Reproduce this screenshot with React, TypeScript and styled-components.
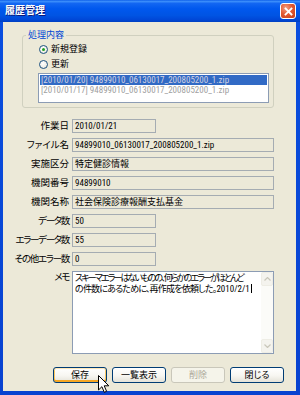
import React, { FC } from 'react';
import styled, { createGlobalStyle, css } from 'styled-components';

const GlobalStyle = createGlobalStyle`
  *, *::before, *::after {
    box-sizing: border-box;
  }
  html, body {
    margin: 0;
    padding: 0;
    background: #ffffff;
  }
`;

const uiFont = `"Roboto Condensed", "DejaVu Sans Condensed", "Noto Sans CJK JP", sans-serif`;

const Window = styled.div`
  position: relative;
  width: 300px;
  height: 395px;
  display: flex;
  flex-direction: column;
  background: linear-gradient(to bottom, #0a4fe0, #0842d0);
  font-family: ${uiFont};
  font-size: 9px;
  font-feature-settings: "palt";
  color: #000;
  overflow: hidden;
`;

const TitleBar = styled.div`
  height: 22px;
  flex: none;
  display: flex;
  align-items: center;
  justify-content: space-between;
  padding: 0 4px 0 5px;
  background: linear-gradient(
    to bottom,
    #0b5ce8 0%,
    #3c8ffb 6%,
    #1266f2 16%,
    #0058ee 40%,
    #0054e3 70%,
    #0048d8 88%,
    #0040c2 100%
  );
`;

const Title = styled.span`
  color: #fff;
  font-weight: bold;
  font-size: 10px;
  line-height: 12px;
  text-shadow: 1px 1px 0 #0a1a7a;
`;

const CloseButton = styled.div`
  width: 16px;
  height: 16px;
  display: flex;
  align-items: center;
  justify-content: center;
  border: 1px solid #fff;
  border-radius: 3px;
  background: radial-gradient(circle at 35% 30%, #f2a085 0%, #e35a33 45%, #c43e17 100%);
`;

const Body = styled.div`
  flex: 1;
  margin: 0 4px 4px 3px;
  padding: 8px 12px 8px 10px;
  display: grid;
  grid-template-columns: 56px 202px;
  grid-template-rows: auto auto 1fr;
  column-gap: 3px;
  background: #ece9d8;
  overflow: hidden;
`;

const GroupBox = styled.fieldset`
  grid-column: 1 / -1;
  margin: 0 0 0 9px;
  padding: 0 4px 4px 3px;
  min-width: 0;
  border: 1px solid #d0d0bf;
  border-radius: 3px;
`;

const Legend = styled.legend`
  padding: 0 2px;
  color: #0046d5;
  font-size: 9px;
  line-height: 10px;
`;

const GroupContent = styled.div`
  padding-left: 12px;
  display: flex;
  flex-direction: column;
`;

const RadioRow = styled.label`
  display: flex;
  align-items: center;
  gap: 3px;
  height: 11px;
  margin-top: 4px;
  padding-left: 1px;
  line-height: 11px;
`;

const RadioMark = styled.span<{ $checked?: boolean }>`
  position: relative;
  width: 9px;
  height: 9px;
  border: 1px solid #1c5180;
  border-radius: 50%;
  background: radial-gradient(circle at 40% 35%, #ffffff 0%, #f0efe8 60%, #d9d8cf 100%);

  ${({ $checked }) => $checked && css`
    &::after {
      content: '';
      position: absolute;
      left: 2px;
      top: 2px;
      width: 3px;
      height: 3px;
      border-radius: 50%;
      background: #21a121;
    }
  `}
`;

const ListBox = styled.div`
  margin-top: 3px;
  height: 30px;
  padding: 1px;
  border: 1px solid #8c9cb4;
  background: #fff;
  overflow: hidden;
`;

const ListItem = styled.div<{ $selected?: boolean }>`
  height: 10px;
  line-height: 10px;
  padding: 0 1px;
  white-space: nowrap;
  overflow: hidden;
  color: ${({ $selected }) => $selected ? '#d4d2e2' : '#a0a0a0'};
  background: ${({ $selected }) => $selected ? '#316ac5' : 'transparent'};
`;

const Form = styled.div`
  grid-column: 1 / -1;
  margin-top: 11px;
  display: grid;
  grid-template-columns: subgrid;
  row-gap: 5px;
  align-items: center;
`;

const Label = styled.div<{ $top?: boolean; $tight?: boolean }>`
  text-align: right;
  white-space: nowrap;
  font-size: 9.5px;
  line-height: 14px;
  letter-spacing: ${({ $tight }) => $tight ? '-1.3px' : '0'};
  align-self: ${({ $top }) => $top ? 'start' : 'center'};
  margin-top: ${({ $top }) => $top ? '-1px' : '0'};
`;

const Field = styled.div<{ $short?: boolean }>`
  height: 14px;
  width: ${({ $short }) => $short ? '84px' : 'auto'};
  justify-self: ${({ $short }) => $short ? 'start' : 'stretch'};
  padding: 0 2px;
  line-height: 12px;
  white-space: nowrap;
  overflow: hidden;
  border: 1px solid #a5acb2;
  background: #ece9d8;
`;

const Memo = styled.div`
  height: 83px;
  display: flex;
  border: 1px solid #8c9cb4;
  background: #fff;
  overflow: hidden;
`;

const MemoText = styled.div`
  flex: 1;
  min-width: 0;
  padding: 1px 2px;
  line-height: 11px;
  overflow: hidden;
`;

const MemoLine = styled.div<{ $squeeze: number }>`
  white-space: nowrap;
  letter-spacing: ${({ $squeeze }) => -$squeeze}px;
`;

const Latin = styled.span`
  letter-spacing: 0;
`;

const Caret = styled.span`
  display: inline-block;
  width: 1px;
  height: 9px;
  margin-left: 1px;
  vertical-align: -1px;
  background: #000;
`;

const ScrollBar = styled.div`
  width: 12px;
  flex: none;
  display: flex;
  flex-direction: column;
  justify-content: space-between;
  background: #fbfbf8;
`;

const ScrollButton = styled.div`
  height: 14px;
  display: flex;
  align-items: center;
  justify-content: center;
  border: 1px solid #eeede5;
  border-radius: 2px;
  background: #f4f3ee;
`;

const ButtonRow = styled.div`
  grid-column: 1 / -1;
  align-self: end;
  margin-right: -10px;
  display: flex;
  justify-content: flex-end;
  gap: 5px;
`;

const Button = styled.div<{ $hot?: boolean; $disabled?: boolean }>`
  width: 54px;
  height: 16px;
  display: flex;
  align-items: center;
  justify-content: center;
  border: 1px solid #003c74;
  border-radius: 3px;
  background: linear-gradient(to bottom, #ffffff 0%, #f7f6f1 55%, #e4e2d8 100%);
  line-height: 12px;

  ${({ $hot }) => $hot && css`
    box-shadow:
      inset 0 1px 0 #ffe8b8,
      inset 0 -2px 0 #f5a623,
      inset 1px 0 0 #fbc760,
      inset -1px 0 0 #fbc760;
  `}

  ${({ $disabled }) => $disabled && css`
    border-color: #c9c7ba;
    color: #aca899;
    background: #f5f4ea;
  `}
`;

const Cursor = styled.svg`
  position: absolute;
  left: 98px;
  top: 375px;
`;

const Chevron: FC<{ up?: boolean }> = ({ up }) => (
  <svg width="7" height="4" viewBox="0 0 7 4">
    <path d={up ? 'M0.5 3.5 L3.5 0.5 L6.5 3.5' : 'M0.5 0.5 L3.5 3.5 L6.5 0.5'} fill="none" stroke="#c9c7ba" strokeWidth="1.2" />
  </svg>
);

const rows: { label: string; value: string; short?: boolean; tight?: boolean }[] = [
  { label: '作業日', value: '2010/01/21', short: true },
  { label: 'ファイル名', value: '94899010_06130017_200805200_1.zip' },
  { label: '実施区分', value: '特定健診情報' },
  { label: '機関番号', value: '94899010' },
  { label: '機関名称', value: '社会保険診療報酬支払基金' },
  { label: 'データ数', value: '50', short: true, tight: true },
  { label: 'エラーデータ数', value: '55', short: true, tight: true },
  { label: 'その他エラー数', value: '0', short: true, tight: true }
];

const App: FC = () => {
  return (
    <>
      <GlobalStyle />
      <Window>
        <TitleBar>
          <Title>履歴管理</Title>
          <CloseButton>
            <svg width="9" height="9" viewBox="0 0 9 9">
              <path d="M1.5 1.5 L7.5 7.5 M7.5 1.5 L1.5 7.5" stroke="#fff" strokeWidth="1.8" strokeLinecap="square" />
            </svg>
          </CloseButton>
        </TitleBar>
        <Body>
          <GroupBox>
            <Legend>処理内容</Legend>
            <GroupContent>
              <RadioRow>
                <RadioMark $checked />
                新規登録
              </RadioRow>
              <RadioRow>
                <RadioMark />
                更新
              </RadioRow>
              <ListBox>
                <ListItem $selected>[2010/01/20] 94899010_06130017_200805200_1.zip</ListItem>
                <ListItem>[2010/01/17] 94899010_06130017_200805200_1.zip</ListItem>
              </ListBox>
            </GroupContent>
          </GroupBox>

          <Form>
            {rows.map((row) => (
              <React.Fragment key={row.label}>
                <Label $tight={row.tight}>{row.label}</Label>
                <Field $short={row.short}>{row.value}</Field>
              </React.Fragment>
            ))}
            <Label $top $tight>メモ</Label>
            <Memo>
              <MemoText>
                <MemoLine $squeeze={1.9}>スキーマエラーはないものの、何らかのエラーがほとんど</MemoLine>
                <MemoLine $squeeze={0.8}>
                  の件数にあるために、再作成を依頼した。<Latin>2010/2/1</Latin>
                  <Caret />
                </MemoLine>
              </MemoText>
              <ScrollBar>
                <ScrollButton><Chevron up /></ScrollButton>
                <ScrollButton><Chevron /></ScrollButton>
              </ScrollBar>
            </Memo>
          </Form>

          <ButtonRow>
            <Button $hot>保存</Button>
            <Button>一覧表示</Button>
            <Button $disabled>削除</Button>
            <Button>閉じる</Button>
          </ButtonRow>
        </Body>

        <Cursor width="12" height="19" viewBox="0 0 12 19">
          <path d="M0.5 0.5 L0.5 15 L3.9 11.7 L6.3 17.3 L8.6 16.3 L6.2 10.8 L10.8 10.8 Z" fill="#fff" stroke="#000" strokeWidth="1" strokeLinejoin="miter" />
        </Cursor>
      </Window>
    </>
  );
};

export default App;
